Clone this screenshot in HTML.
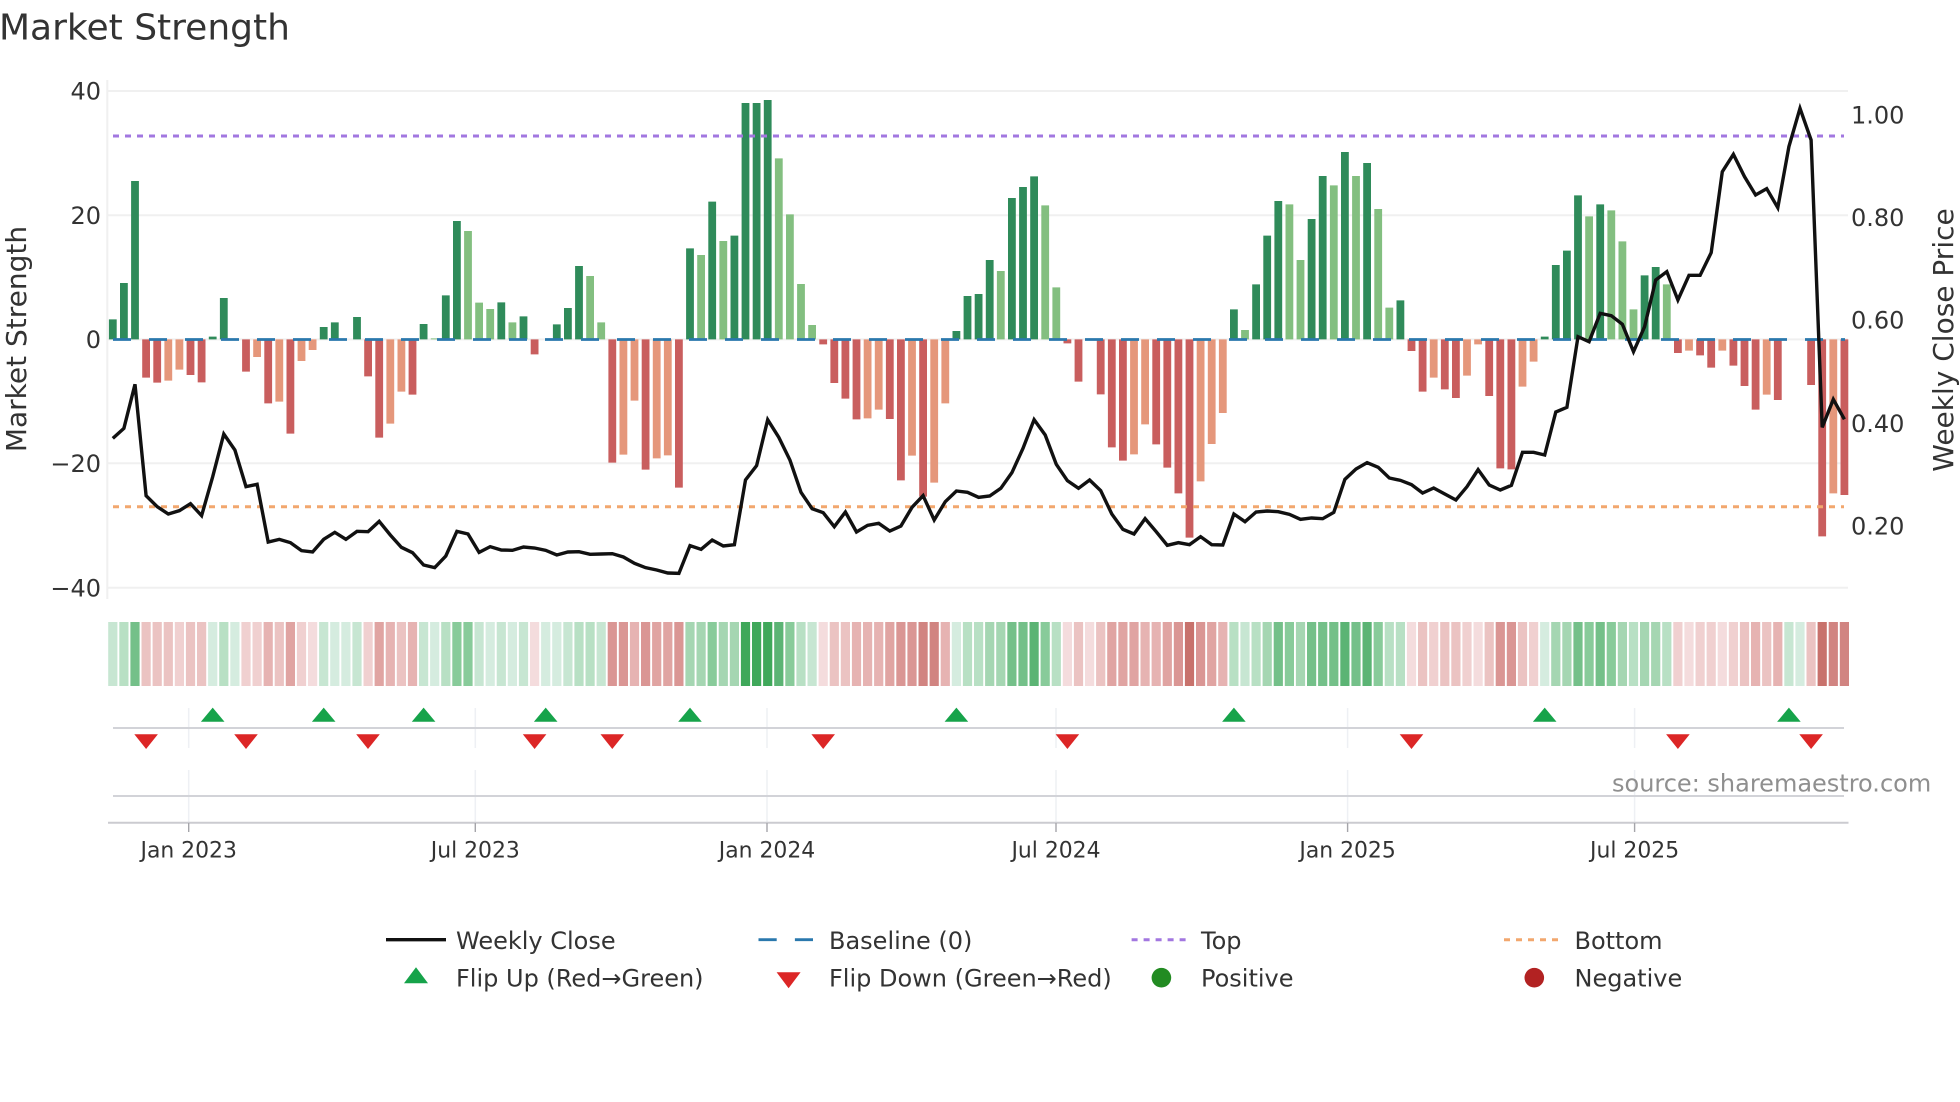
<!DOCTYPE html>
<html lang="en">
<head>
<meta charset="utf-8">
<title>Market Strength</title>
<style>
html,body{margin:0;padding:0;background:#fff;width:1960px;height:1102px;overflow:hidden}
svg{display:block}
text{font-family:"DejaVu Sans","Liberation Sans",sans-serif;fill:#333}
.v{vector-effect:non-scaling-stroke;fill:none}
.t{font-size:24px}
.x{font-size:21.9px;text-anchor:middle}
.l{font-size:24px}
</style>
</head>
<body>
<svg width="1960" height="1102" viewBox="0 0 1960 1102" xmlns="http://www.w3.org/2000/svg">
<rect width="1960" height="1102" fill="#fff"/>
<text x="-1" y="39.3" style="font-size:36px">Market Strength</text>

<!-- grid -->
<path d="M107 91H1848M107 215.3H1848M107 339.4H1848M107 463.3H1848M107 587.7H1848M107.3 80V599" stroke="#f0f0f0" stroke-width="2" fill="none"/>

<!-- bars -->
<g transform="translate(112.8 320) scale(11.1 .33333)" stroke-width="7.8">
<path class="v" stroke="#2f8b5a" d="M0 58V-2M1 58V-111M2 58V-417M9 58V50M10 58V-66M19 58V21M20 58V7M22 58V-9M28 58V12M30 58V-74M31 58V-297M35 58V-53M37 58V-11M40 58V13M41 58V-36M42 58V-162M52 58V-215M54 58V-355M56 58V-253M57 58V-651M58 58V-651M59 58V-660M76 58V33M77 58V-72M78 58V-78M79 58V-180M81 58V-366M82 58V-399M83 58V-431M101 58V-32M103 58V-107M104 58V-253M105 58V-357M108 58V-303M109 58V-432M111 58V-504M113 58V-471M116 58V-59M129 58V50M130 58V-165M131 58V-208M132 58V-374M134 58V-347M138 58V-134M139 58V-159"/>
<path class="v" stroke="#83bf80" d="M29 58V55M32 58V-267M33 58V-52M34 58V-33M36 58V7M43 58V-132M44 58V7M53 58V-195M55 58V-237M60 58V-485M61 58V-317M62 58V-108M63 58V15M80 58V-147M84 58V-344M85 58V-98M102 58V30M106 58V-347M107 58V-180M110 58V-404M112 58V-432M114 58V-333M115 58V-37M133 58V-311M135 58V-329M136 58V-236M137 58V-32M140 58V-107"/>
<path class="v" stroke="#c95e5e" d="M3 58V173M4 58V188M7 58V165M8 58V187M12 58V155M14 58V250M16 58V341M23 58V169M24 58V353M27 58V224M38 58V103M45 58V428M48 58V449M51 58V503M64 58V73M65 58V189M66 58V236M67 58V298M70 58V297M71 58V481M73 58V530M86 58V70M87 58V185M89 58V223M90 58V382M91 58V422M94 58V373M95 58V443M96 58V520M97 58V653M117 58V93M118 58V215M120 58V208M121 58V234M124 58V228M125 58V445M126 58V448M141 58V99M143 58V106M144 58V143M146 58V137M147 58V198M148 58V269M150 58V240M153 58V195M154 58V649M156 58V525"/>
<path class="v" stroke="#e5977b" d="M5 58V182M6 58V149M13 58V111M15 58V245M17 58V123M18 58V90M25 58V311M26 58V215M46 58V404M47 58V242M49 58V415M50 58V406M68 58V295M69 58V269M72 58V407M74 58V488M75 58V250M92 58V403M93 58V313M98 58V484M99 58V372M100 58V279M119 58V173M122 58V167M123 58V73M127 58V200M128 58V125M142 58V92M145 58V92M149 58V224M155 58V520"/>
</g>

<!-- reference lines -->
<line x1="113" x2="1845" y1="339.5" y2="339.5" stroke="#2a78ad" stroke-width="2.8" stroke-dasharray="18 18"/>
<line x1="113" x2="1844" y1="136" y2="136" stroke="#a277e0" stroke-width="3" stroke-dasharray="6 6"/>
<line x1="113" x2="1844" y1="506.7" y2="506.7" stroke="#f2a76e" stroke-width="3" stroke-dasharray="6 6"/>

<!-- weekly close -->
<g transform="translate(112.8 320) scale(11.1 .33333)">
<polyline class="v" stroke="#111" stroke-width="3.4" stroke-linejoin="miter" points="0,355 1,325 2,193 3,527 4,560 5,582 6,572 7,551 8,587 9,470 10,342 11,390 12,500 13,493 14,666 15,658 16,668 17,692 18,696 19,658 20,637 21,658 22,634 23,635 24,604 25,645 26,682 27,698 28,735 29,743 30,708 31,634 32,642 33,697 34,680 35,690 36,691 37,681 38,684 39,691 40,705 41,696 42,695 43,703 44,702 45,701 46,711 47,730 48,743 49,750 50,759 51,760 52,677 53,688 54,660 55,678 56,674 57,480 58,437 59,299 60,352 61,420 62,517 63,566 64,578 65,620 66,576 67,636 68,616 69,610 70,633 71,618 72,562 73,527 74,600 75,545 76,513 77,517 78,532 79,528 80,505 81,458 82,385 83,299 84,345 85,433 86,482 87,505 88,480 89,512 90,582 91,628 92,642 93,596 94,635 95,676 96,668 97,674 98,650 99,674 100,675 101,582 102,605 103,576 104,573 105,575 106,583 107,598 108,594 109,596 110,577 111,478 112,447 113,428 114,442 115,474 116,481 117,494 118,519 119,504 120,522 121,540 122,500 123,449 124,495 125,510 126,496 127,397 128,397 129,405 130,276 131,262 132,50 133,65 134,-20 135,-13 136,13 137,95 138,20 139,-120 140,-145 141,-60 142,-134 143,-134 144,-202 145,-445 146,-497 147,-430 148,-375 149,-394 150,-337 151,-520 152,-635 153,-540 154,322 155,238 156,298"/>
</g>

<!-- left axis -->
<g text-anchor="end">
<text x="101" y="99.7" class="t">40</text>
<text x="101" y="224" class="t">20</text>
<text x="101" y="348" class="t">0</text>
<text x="101" y="472" class="t">−20</text>
<text x="101" y="596.4" class="t">−40</text>
</g>
<!-- right axis -->
<text x="1851" y="123.7" class="t">1.00</text>
<text x="1851" y="226" class="t">0.80</text>
<text x="1851" y="328.7" class="t">0.60</text>
<text x="1851" y="432" class="t">0.40</text>
<text x="1851" y="534.7" class="t">0.20</text>
<text transform="translate(26 339) rotate(-90)" text-anchor="middle" style="font-size:28px">Market Strength</text>
<text transform="translate(1953 340) rotate(-90)" text-anchor="middle" style="font-size:28px">Weekly Close Price</text>

<!-- heat strip -->
<g transform="translate(112.8 0) scale(11.1 1)" stroke-width="9.2">
<path class="v" stroke="#d5ecdf" d="M9 622V686M11 622V686M20 622V686M21 622V686M29 622V686M34 622V686M36 622V686M39 622V686M40 622V686M76 622V686M129 622V686M152 622V686"/>
<path class="v" stroke="#c7e6d2" d="M0 622V686M19 622V686M22 622V686M28 622V686M33 622V686M35 622V686M37 622V686M41 622V686M44 622V686M63 622V686M102 622V686M151 622V686"/>
<path class="v" stroke="#b8e0c4" d="M1 622V686M10 622V686M30 622V686M42 622V686M43 622V686M62 622V686M77 622V686M78 622V686M85 622V686M101 622V686M103 622V686M115 622V686M116 622V686M137 622V686M140 622V686"/>
<path class="v" stroke="#a5d6b2" d="M52 622V686M53 622V686M55 622V686M56 622V686M79 622V686M80 622V686M104 622V686M107 622V686M130 622V686M131 622V686M136 622V686M138 622V686M139 622V686"/>
<path class="v" stroke="#88cb9a" d="M31 622V686M32 622V686M54 622V686M61 622V686M84 622V686M106 622V686M114 622V686M133 622V686M135 622V686"/>
<path class="v" stroke="#74c089" d="M2 622V686M81 622V686M82 622V686M105 622V686M108 622V686M109 622V686M110 622V686M112 622V686M132 622V686M134 622V686"/>
<path class="v" stroke="#5bb474" d="M60 622V686M83 622V686M111 622V686M113 622V686"/>
<path class="v" stroke="#3fa85a" d="M57 622V686M58 622V686M59 622V686"/>
<path class="v" stroke="#f4dcdd" d="M18 622V686M38 622V686M64 622V686M86 622V686M88 622V686M117 622V686M123 622V686M142 622V686M145 622V686"/>
<path class="v" stroke="#f0d0d0" d="M6 622V686M12 622V686M13 622V686M17 622V686M23 622V686M119 622V686M122 622V686M128 622V686M141 622V686M143 622V686M144 622V686M146 622V686"/>
<path class="v" stroke="#ebc3c2" d="M3 622V686M4 622V686M5 622V686M7 622V686M8 622V686M15 622V686M26 622V686M65 622V686M66 622V686M87 622V686M89 622V686M118 622V686M120 622V686M121 622V686M124 622V686M127 622V686M147 622V686M149 622V686M153 622V686"/>
<path class="v" stroke="#e6b3b2" d="M14 622V686M25 622V686M27 622V686M47 622V686M67 622V686M68 622V686M69 622V686M75 622V686M93 622V686M94 622V686M100 622V686M148 622V686M150 622V686"/>
<path class="v" stroke="#e0a4a2" d="M16 622V686M24 622V686M49 622V686M50 622V686M70 622V686M90 622V686M91 622V686M92 622V686M95 622V686M99 622V686"/>
<path class="v" stroke="#da9694" d="M45 622V686M46 622V686M48 622V686M51 622V686M71 622V686M72 622V686M96 622V686M98 622V686M125 622V686M126 622V686"/>
<path class="v" stroke="#d18481" d="M73 622V686M74 622V686M155 622V686M156 622V686"/>
<path class="v" stroke="#c8726c" d="M97 622V686M154 622V686"/>
</g>

<!-- lower panels -->
<path d="M188.7 708V748M475.3 708V748M767 708V748M1056 708V748M1347.6 708V748M1634.6 708V748M188.7 770V822M475.3 770V822M767 770V822M1056 770V822M1347.6 770V822M1634.6 770V822" stroke="#eef0f4" stroke-width="1.5" fill="none"/>
<path d="M113 728H1844M113 796H1844" stroke="#d2d3d8" stroke-width="2" fill="none"/>
<path d="M108 822.7H1848.5" stroke="#cbcbd0" stroke-width="2" fill="none"/>
<path d="M188.7 823V832M475.3 823V832M767 823V832M1056 823V832M1347.6 823V832M1634.6 823V832" stroke="#a5a5aa" stroke-width="1.4" fill="none"/>

<g fill="#16a34a">
<path d="M212.7 707.6l11.8 14.2h-23.6z"/><path d="M323.7 707.6l11.8 14.2h-23.6z"/><path d="M423.6 707.6l11.8 14.2h-23.6z"/><path d="M545.7 707.6l11.8 14.2h-23.6z"/><path d="M690 707.6l11.8 14.2h-23.6z"/><path d="M956.4 707.6l11.8 14.2h-23.6z"/><path d="M1233.9 707.6l11.8 14.2h-23.6z"/><path d="M1544.7 707.6l11.8 14.2h-23.6z"/><path d="M1788.9 707.6l11.8 14.2h-23.6z"/>
</g>
<g fill="#dc2626">
<path d="M146.1 749l11.8-14.7h-23.6z"/><path d="M246 749l11.8-14.7h-23.6z"/><path d="M368 749l11.8-14.7h-23.6z"/><path d="M534.6 749l11.8-14.7h-23.6z"/><path d="M612.3 749l11.8-14.7h-23.6z"/><path d="M823.2 749l11.8-14.7h-23.6z"/><path d="M1067.4 749l11.8-14.7h-23.6z"/><path d="M1411.5 749l11.8-14.7h-23.6z"/><path d="M1677.9 749l11.8-14.7h-23.6z"/><path d="M1811.1 749l11.8-14.7h-23.6z"/>
</g>

<text x="1612" y="791.5" style="font-size:24px;fill:#8f8f8f">source: sharemaestro.com</text>

<!-- x labels -->
<text x="188.7" y="857.3" class="x">Jan 2023</text>
<text x="475.3" y="857.3" class="x">Jul 2023</text>
<text x="767" y="857.3" class="x">Jan 2024</text>
<text x="1056" y="857.3" class="x">Jul 2024</text>
<text x="1347.6" y="857.3" class="x">Jan 2025</text>
<text x="1634.6" y="857.3" class="x">Jul 2025</text>

<!-- legend -->
<line x1="386" x2="446" y1="939.7" y2="939.7" stroke="#111" stroke-width="3.4"/>
<text x="456" y="949" class="l">Weekly Close</text>
<line x1="758.5" x2="813" y1="939.7" y2="939.7" stroke="#2a78ad" stroke-width="2.8" stroke-dasharray="18.2 18.2"/>
<text x="829" y="949" class="l">Baseline (0)</text>
<line x1="1131.6" x2="1186" y1="939.7" y2="939.7" stroke="#a277e0" stroke-width="3" stroke-dasharray="6 6"/>
<text x="1201" y="949" class="l">Top</text>
<line x1="1504" x2="1559" y1="939.7" y2="939.7" stroke="#f2a76e" stroke-width="3" stroke-dasharray="6 6"/>
<text x="1574.5" y="949" class="l">Bottom</text>

<path d="M416 967.3l12 16h-24z" fill="#16a34a"/>
<text x="456" y="986.6" class="l">Flip Up (Red→Green)</text>
<path d="M788.6 988.3l12-16h-24z" fill="#dc2626"/>
<text x="829" y="986.6" class="l">Flip Down (Green→Red)</text>
<circle cx="1161.4" cy="977.7" r="9.8" fill="#228b22"/>
<text x="1201" y="986.6" class="l">Positive</text>
<circle cx="1534.3" cy="977.7" r="9.8" fill="#b22222"/>
<text x="1574.5" y="986.6" class="l">Negative</text>
</svg>
</body>
</html>
